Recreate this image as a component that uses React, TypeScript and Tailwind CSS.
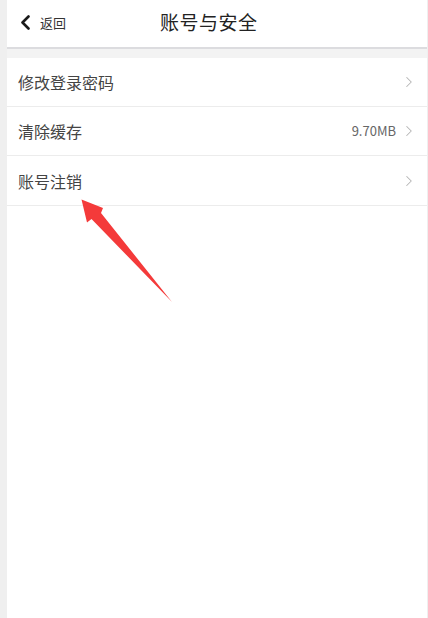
import { ChevronRight } from "lucide-react";

const rows = [
  { label: "修改登录密码" },
  { label: "清除缓存", value: "9.70MB" },
  { label: "账号注销" },
];

function ArrowPointer() {
  return (
    <svg
      className="pointer-events-none absolute left-0 top-0"
      width="428"
      height="618"
      viewBox="0 0 428 618"
      aria-hidden="true"
    >
      <polygon
        points="81.5,199.5 103,208 101,213 172,302 91.5,219 87,222.5"
        fill="#f43a3a"
      />
    </svg>
  );
}

export default function App() {
  return (
    <div
      className="relative flex h-[618px] w-[428px] overflow-hidden bg-[#efefef]"
      style={{ fontFamily: '"Noto Sans CJK SC", "Noto Sans", sans-serif' }}
    >
      <div className="ml-[7px] mr-px flex flex-1 flex-col bg-white">
        <header className="relative flex h-[49px] items-center border-b-2 border-[#dcdcdf] bg-white pb-[2px]">
          <button className="flex items-center pl-[13px] text-[#222]">
            <svg width="10" height="15" viewBox="0 0 10 15" aria-hidden="true">
              <path
                d="M8.5 1.5 L2.5 7.5 L8.5 13.5"
                fill="none"
                stroke="#1a1a1a"
                strokeWidth="2.6"
                strokeLinecap="round"
                strokeLinejoin="round"
              />
            </svg>
            <span className="ml-[10px] text-[13px] text-[#333]">返回</span>
          </button>
          <h1 className="absolute left-[153px] top-[8px] text-[19px] tracking-[0.5px] text-[#222]">
            账号与安全
          </h1>
        </header>
        <div className="h-[9px] bg-[#f3f3f3]" />
        <ul className="border-b border-[#ececec]">
          {rows.map((r, i) => (
            <li
              key={r.label}
              className={
                "flex h-[49px] items-center pl-[11px] pr-[12px] " +
                (i < rows.length - 1 ? "border-b border-[#ececec]" : "")
              }
            >
              <span className="flex-1 text-[16px] text-[#444]">{r.label}</span>
              {r.value && (
                <span className="mr-[4px] text-[13px] text-[#666]">{r.value}</span>
              )}
              <ChevronRight className="-mr-[3px] h-[18px] w-[18px] text-[#b5b5b5]" strokeWidth={1.4} />
            </li>
          ))}
        </ul>
        <div className="flex-1 bg-white" />
      </div>
      <ArrowPointer />
    </div>
  );
}
